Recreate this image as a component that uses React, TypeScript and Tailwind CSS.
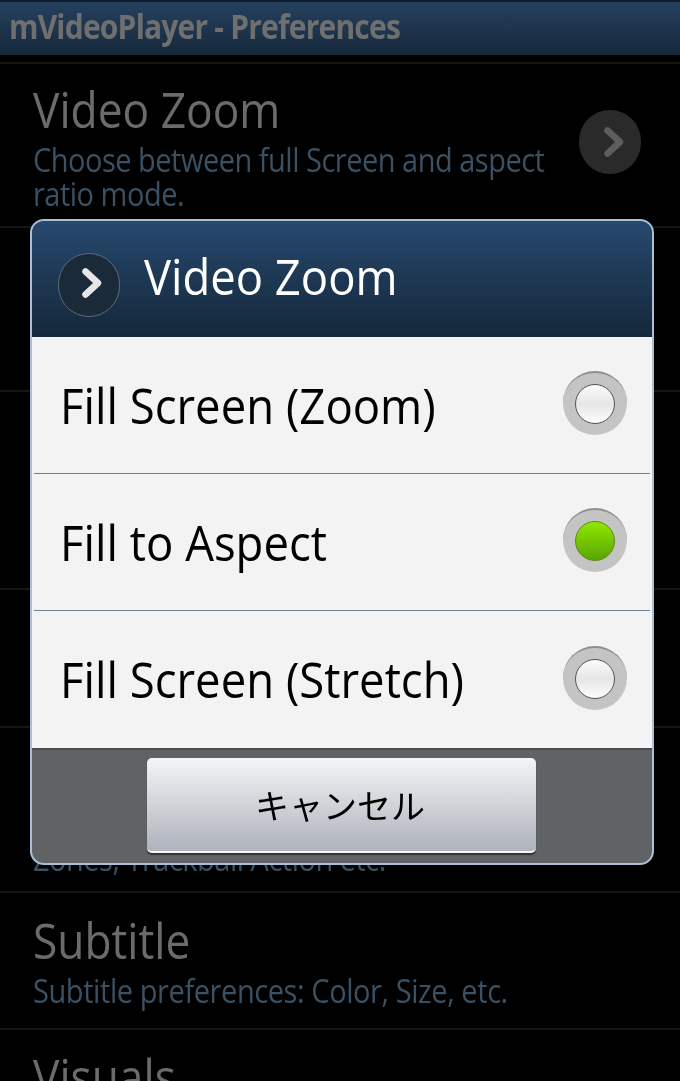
const font = { fontFamily: '"Open Sans", "Noto Sans CJK JP", sans-serif' };

// rows hidden behind the dialog only keep what actually peeks out
const prefs = [
  { title: "Video Zoom", desc: ["Choose between full Screen and aspect", "ratio mode."], h: "h-[164px]", arrow: true, lead: "-mt-[2px] leading-[68px]", track: "tracking-[-0.5px]" },
  { title: "", desc: [], h: "h-[164px]", arrow: false, lead: "", track: "" },
  { title: "", desc: [], h: "h-[198px]", arrow: false, lead: "", track: "" },
  { title: "", desc: [], h: "h-[138px]", arrow: false, lead: "", track: "" },
  { title: "", desc: ["Zones, Trackball Action etc."], h: "h-[165px]", arrow: false, lead: "", track: "tracking-[-0.5px]" },
  { title: "Subtitle", desc: ["Subtitle preferences: Color, Size, etc."], h: "h-[137px]", arrow: false, lead: "leading-[68px]", track: "tracking-[-0.42px]" },
  { title: "Visuals", desc: [], h: "h-[137px]", arrow: false, lead: "leading-[66px]", track: "" },
];

const options = [
  { label: "Fill Screen (Zoom)", checked: false },
  { label: "Fill to Aspect", checked: true },
  { label: "Fill Screen (Stretch)", checked: false },
];

function Chevron({ className }: { className: string }) {
  return (
    <svg width="22" height="32" viewBox="0 0 22 32" fill="none" className={className}>
      <path d="M4.5 4.5 L17 16 L4.5 27.5" stroke="currentColor" strokeWidth="6.5" strokeLinecap="round" strokeLinejoin="round" />
    </svg>
  );
}

function Radio({ checked }: { checked: boolean }) {
  return (
    <div className="flex h-16 w-16 items-center justify-center rounded-full border-t-2 border-[#8e8e8e] bg-[#c4c4c4]">
      <div
        className={
          checked
            ? "h-10 w-10 rounded-full border border-[#5f8a10] bg-gradient-to-b from-[#8eea00] to-[#5aa400]"
            : "h-10 w-10 rounded-full border border-[#555] bg-gradient-to-b from-[#fbfbfb] via-[#e6e6e6] to-[#fdfdfd]"
        }
      />
    </div>
  );
}

export default function App() {
  return (
    <div className="h-[1081px] w-[680px] overflow-hidden bg-black">
      <div className="relative h-[1081px] w-[680px] overflow-hidden bg-black blur-[0.5px]" style={font}>
        <div className="flex h-[55px] items-center border-t-2 border-[#0f1d2b] bg-gradient-to-b from-[#25415f] to-[#16293c] pb-[4px] pl-[9px]">
          <span className="inline-block scale-y-[1.12] text-[30px] font-bold tracking-[-0.8px] text-[#6f6f6f]">mVideoPlayer - Preferences</span>
        </div>
        <div className="mt-[7px] border-t-2 border-[#161616]">
          {prefs.map((p, i) => (
            <div key={i} className={`flex items-start justify-between border-b-2 border-[#161616] pl-[33px] pr-[39px] ${p.h}`}>
              <div className={p.title ? "pt-[13px]" : "pt-[114px]"}>
                {p.title && <div className={`scale-y-[1.1] text-[44.3px] text-[#6b6b6b] ${p.lead}`}>{p.title}</div>}
                {p.desc.map((line) => (
                  <div key={line} className={`scale-y-[1.1] text-[29px] leading-[34px] text-[#3a5063] ${p.track}`}>{line}</div>
                ))}
              </div>
              {p.arrow && (
                <div className="mt-[46px] flex h-[64px] w-[62px] items-center justify-center rounded-full bg-[#2a2a2a]">
                  <Chevron className="ml-[7px] text-[#5e5e5e]" />
                </div>
              )}
            </div>
          ))}
        </div>

        <div className="absolute left-[30px] top-[219px] flex h-[646px] w-[624px] flex-col overflow-hidden rounded-[14px] border-2 border-[#a9c0d6] bg-[#5f6366]">
          <div className="flex h-[116px] shrink-0 items-center gap-[24px] bg-gradient-to-b from-[#27496f] to-[#15283a] pl-[26px]">
            <div className="mt-[12px] flex h-[64px] w-[62px] items-center justify-center rounded-full border border-[#5a6b7a] bg-[#1a2a39]">
              <Chevron className="mb-[4px] ml-[6px] text-[#e6e6e6]" />
            </div>
            <span className="mb-[6px] inline-block scale-y-[1.08] text-[45.4px] text-white">Video Zoom</span>
          </div>
          <div className="shrink-0 bg-[#f3f3f3]">
            {options.map((o, i) => (
              <div key={o.label} className={`mx-[2px] flex h-[137px] items-center justify-between pl-[26px] pr-[23px] ${i < 2 ? "border-b border-[#6d8090]" : ""}`}>
                <span className="inline-block scale-y-[1.08] text-[45.5px] text-black">{o.label}</span>
                <div className="mb-[4px]"><Radio checked={o.checked} /></div>
              </div>
            ))}
          </div>
          <div className="flex flex-1 justify-center border-t-2 border-[#4a4d50] pr-[1px] pt-[8px]">
            <div className="flex h-[95px] w-[389px] items-center justify-center rounded-[5px] border-b-2 border-[#f5f5f5] bg-gradient-to-b from-[#f4f5f6] to-[#aeb2bb] pr-[3px] pt-[4px] text-[34px] text-black shadow-[0_2px_1px_#333]">
              キャンセル
            </div>
          </div>
        </div>
      </div>
    </div>
  );
}
